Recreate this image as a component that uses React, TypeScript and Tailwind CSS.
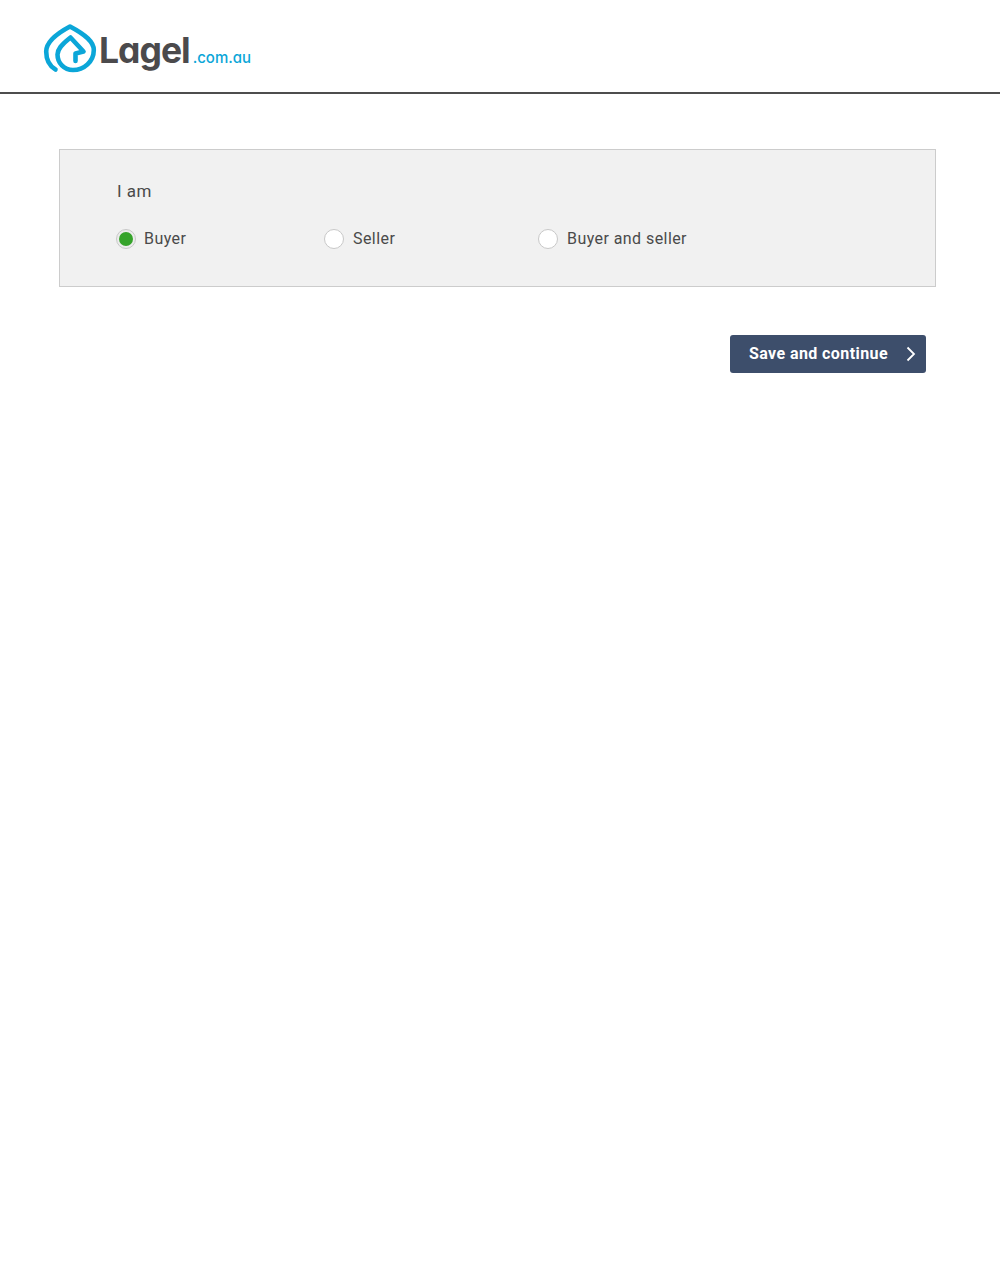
type RadioProps = {
  label: string;
  checked?: boolean;
  className: string;
};

function Radio({ label, checked, className }: RadioProps) {
  return (
    <label className={`flex items-center ${className}`}>
      <span
        className={`flex size-[20px] items-center justify-center rounded-full border border-[#c8c8c8] ${
          checked ? "bg-[#ececec]" : "bg-white"
        }`}
      >
        {checked && <span className="size-[14px] rounded-full bg-[#35a32a]" />}
      </span>
      <span className="text-[16px] leading-[24px] tracking-[0.43px] text-[#4a4a4a]">{label}</span>
    </label>
  );
}

function Logo() {
  return (
    <div className="flex items-start">
      <svg width="60" height="60" viewBox="40 20 60 60" fill="none" className="-ml-[3px]">
        <path
          d="M55.5 70.5C49.5 67 46.2 60 46.2 52.5C46.2 44 54 36 70 27.5C86 36 93.8 43 93.8 51C93.8 62.5 84 71 73 71C64 71 57.5 64 57.5 55.5C57.5 50.5 61 46 70.5 38.5L83.5 52.5L75.5 54.5L75.5 62"
          stroke="#0ba6d8"
          strokeWidth="4.6"
          strokeLinecap="round"
          strokeLinejoin="round"
        />
      </svg>
      <div className="-ml-[1px] flex h-[60px] items-baseline font-['Inter',sans-serif] leading-none [font-feature-settings:'cv11']">
        <span className="mt-[14px] text-[35.5px] font-bold tracking-[-1px] text-[#4b4a4c]">Lagel</span>
        <span className="ml-[3px] text-[15px] font-medium text-[#0ba6d8]">.com.au</span>
      </div>
    </div>
  );
}

export default function App() {
  return (
    <div className="min-h-[1286px] bg-white font-['Roboto',sans-serif]">
      <header className="flex h-[94px] items-start border-b-2 border-[#4d4d4d] pt-[19px] pl-[43px]">
        <Logo />
      </header>
      <main className="flex flex-col pt-[55px] pr-[64px] pl-[59px]">
        <section className="h-[138px] border border-[#cccccc] bg-[#f1f1f1] pt-[28px] pl-[56px]">
          <p className="pl-[1px] text-[17px] leading-[26px] tracking-[0.5px] text-[#4a4a4a]">I am</p>
          <div className="mt-[23px] flex">
            <Radio label="Buyer" checked className="w-[208px] gap-[8px]" />
            <Radio label="Seller" className="w-[214px] gap-[9px]" />
            <Radio label="Buyer and seller" className="w-[200px] gap-[9px]" />
          </div>
        </section>
        <div className="mt-[48px] flex justify-end pr-[10px]">
          <button className="flex h-[38px] w-[196px] items-center justify-between rounded-[3px] bg-[#3d4e6b] pr-[10px] pl-[19px] text-[16px] font-bold tracking-[0.41px] text-white">
            Save and continue
            <svg width="10" height="16" viewBox="0 0 10 16" fill="none" className="-mt-[1px]">
              <path d="M1.5 1.5L8 8L1.5 14.5" stroke="white" strokeWidth="1.8" />
            </svg>
          </button>
        </div>
      </main>
    </div>
  );
}
